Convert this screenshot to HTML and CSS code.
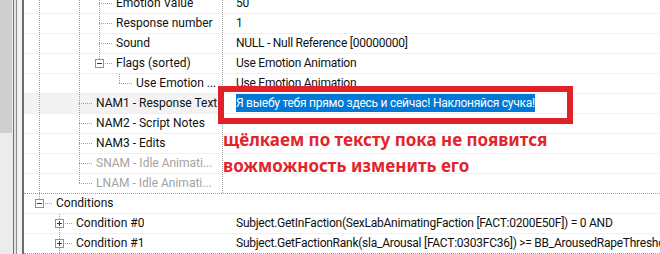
FILE: index.html
```html
<!DOCTYPE html>
<html lang="ru">

<head>
    <meta charset="UTF-8">
    <title>Response Text</title>
    <link rel="stylesheet" href="styles.css">
</head>

<body>
    <div class="window">
        <div class="gutter">
            <div class="gutter-top"></div>
            <div class="gutter-bottom"></div>
        </div>
        <div class="frame">
            <span class="f1"></span><span class="f2"></span><span class="f3"></span><span class="f4"></span><span class="f5"></span><span class="f6"></span>
        </div>

        <div class="tree">
            <div class="row">
                <div class="label">
                    <span class="u pass"></span><span class="u"></span><span class="u pass"></span><span class="c tee"></span>
                    <span class="name">Emotion Value</span>
                </div>
                <div class="value">50</div>
            </div>
            <div class="row">
                <div class="label">
                    <span class="u pass"></span><span class="u"></span><span class="u pass"></span><span class="c tee"></span>
                    <span class="name">Response number</span>
                </div>
                <div class="value">1</div>
            </div>
            <div class="row">
                <div class="label">
                    <span class="u pass"></span><span class="u"></span><span class="u pass"></span><span class="c tee"></span>
                    <span class="name">Sound</span>
                </div>
                <div class="value">NULL - Null Reference [00000000]</div>
            </div>
            <div class="row">
                <div class="label">
                    <span class="u pass"></span><span class="u"></span><span class="u pass"></span><span class="c end"><span class="box minus"></span></span>
                    <span class="name">Flags (sorted)</span>
                </div>
                <div class="value">Use Emotion Animation</div>
            </div>
            <div class="row">
                <div class="label">
                    <span class="u pass"></span><span class="u"></span><span class="u pass"></span><span class="u"></span><span class="c end"></span>
                    <span class="name">Use Emotion ...</span>
                </div>
                <div class="value">Use Emotion Animation</div>
            </div>
            <div class="row current">
                <div class="label">
                    <span class="u pass"></span><span class="u"></span><span class="c tee"></span>
                    <span class="name">NAM1 - Response Text</span>
                </div>
                <div class="value"><span class="selected">Я выебу тебя прямо здесь и сейчас! Наклоняйся сучка!</span></div>
            </div>
            <div class="row">
                <div class="label">
                    <span class="u pass"></span><span class="u"></span><span class="c tee"></span>
                    <span class="name">NAM2 - Script Notes</span>
                </div>
                <div class="value"></div>
            </div>
            <div class="row">
                <div class="label">
                    <span class="u pass"></span><span class="u"></span><span class="c tee"></span>
                    <span class="name">NAM3 - Edits</span>
                </div>
                <div class="value"></div>
            </div>
            <div class="row">
                <div class="label">
                    <span class="u pass"></span><span class="u"></span><span class="c tee"></span>
                    <span class="name muted">SNAM - Idle Animati...</span>
                </div>
                <div class="value"></div>
            </div>
            <div class="row last">
                <div class="label">
                    <span class="u pass"></span><span class="u"></span><span class="c end"></span>
                    <span class="name muted">LNAM - Idle Animati...</span>
                </div>
                <div class="value"></div>
            </div>

            <div class="section">
                <div class="row cond">
                    <div class="label">
                        <span class="c end"><span class="box minus"></span></span>
                        <span class="name">Conditions</span>
                    </div>
                    <div class="value"></div>
                </div>
                <div class="row cond">
                    <div class="label">
                        <span class="u"></span><span class="c tee"><span class="box plus"></span></span>
                        <span class="name">Condition #0</span>
                    </div>
                    <div class="value">Subject.GetInFaction(SexLabAnimatingFaction [FACT:0200E50F]) = 0 AND</div>
                </div>
                <div class="row cond bottom">
                    <div class="label">
                        <span class="u"></span><span class="c tee"><span class="box plus"></span></span>
                        <span class="name">Condition #1</span>
                    </div>
                    <div class="value">Subject.GetFactionRank(sla_Arousal [FACT:0303FC36]) &gt;= BB_ArousedRapeThreshold</div>
                </div>
            </div>
        </div>

        <!-- annotation drawn over the screenshot -->
        <div class="mark"></div>
        <div class="note">щёлкаем по тексту пока не появится<br>вожможность изменить его</div>
    </div>
</body>

</html>
```

FILE: styles.css
```css
* {
    padding: 0;
    margin: 0;
    box-sizing: border-box;
}

body {
    font-family: Roboto, "Noto Sans", sans-serif;
    font-size: 12px;
    color: #111;
    background: #fff;
}

.window {
    position: relative;
    width: 660px;
    height: 254px;
    overflow: hidden;
    display: flex;
}

.gutter {
    width: 12px;
    display: flex;
    flex-direction: column;
}

.gutter-top {
    height: 133px;
    background-color: #cfcfcf;
}

.gutter-bottom {
    flex: 1;
    background-color: #ececec;
}

.frame {
    width: 12px;
    display: flex;
}

.f1 { width: 1px; background: #ebebeb; }
.f2 { width: 1px; background: #727272; }
.f3 { width: 2px; background: #e4e4e4; }
.f4 { width: 1px; background: #8c8c8c; }
.f5 { width: 5px; background: #f1f1f1; }
.f6 { width: 2px; background: #6b6b6b; }

.tree {
    flex: 1;
    margin-top: -6px;
    min-width: 0;
}

.row {
    display: flex;
    height: 20px;
    border-bottom: 1px solid #f0f0f0;
}

.row.last {
    border-bottom: none;
    height: 19px;
}

.label {
    width: 199px;
    flex-shrink: 0;
    display: flex;
    border-right: 1px dotted #a0a0a0;
}

.row.current .label {
    background-color: #f3f3f3;
}

.row.cond .label {
    border-right-color: transparent;
}

.section {
    border-top: 1px dotted #a0a0a0;
}

.row.bottom {
    border-bottom: 1px dotted #a0a0a0;
}

/* tree guides: 20px per level, line 15px in */
.u {
    width: 20px;
    flex-shrink: 0;
}

.u.pass {
    background: repeating-linear-gradient(to bottom, #a0a0a0 0 1px, transparent 1px 2px) 15px 0 / 1px 100% no-repeat;
}

.c {
    width: 32px;
    flex-shrink: 0;
    display: flex;
    align-items: center;
}

.c.tee {
    background:
        repeating-linear-gradient(to right, #a0a0a0 0 1px, transparent 1px 2px) 15px 9px / 14px 1px no-repeat,
        repeating-linear-gradient(to bottom, #a0a0a0 0 1px, transparent 1px 2px) 15px 0 / 1px 100% no-repeat;
}

.c.end {
    background:
        repeating-linear-gradient(to right, #a0a0a0 0 1px, transparent 1px 2px) 15px 9px / 14px 1px no-repeat,
        repeating-linear-gradient(to bottom, #a0a0a0 0 1px, transparent 1px 2px) 15px 0 / 1px 10px no-repeat;
}

.box {
    width: 9px;
    height: 9px;
    margin-left: 11px;
    margin-top: -1px;
    border: 1px solid #919191;
}

.box.minus {
    background: linear-gradient(#3a3a3a, #3a3a3a) center / 5px 1px no-repeat, #fff;
}

.box.plus {
    background:
        linear-gradient(#3a3a3a, #3a3a3a) center / 5px 1px no-repeat,
        linear-gradient(#3a3a3a, #3a3a3a) center / 1px 5px no-repeat,
        #fff;
}

.name {
    line-height: 19px;
    white-space: nowrap;
    overflow: hidden;
}

.name.muted {
    color: #a3a3a3;
}

.value {
    flex: 1;
    padding-left: 13px;
    line-height: 19px;
    letter-spacing: -0.25px;
    white-space: nowrap;
    overflow: hidden;
}

.selected {
    background-color: #0078d7;
    color: #fff;
    padding: 2px 0;
}

.mark {
    position: absolute;
    left: 218px;
    top: 86px;
    width: 355px;
    height: 38px;
    border: 6px solid #e0212a;
}

.note {
    position: absolute;
    left: 223px;
    top: 127px;
    font-family: "Noto Sans", sans-serif;
    font-size: 17px;
    font-weight: bold;
    line-height: 26px;
    color: #e3242b;
    white-space: nowrap;
}
```
